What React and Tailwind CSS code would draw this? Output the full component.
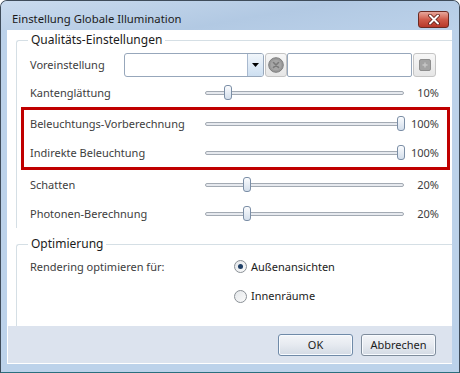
import React from "react";

const font = { fontFamily: '"Noto Sans", "Open Sans", sans-serif' };

function Slider({ value }) {
  const left = Math.round((value / 100) * 192);
  return (
    <div className="relative w-[199px] h-[16px] flex items-center">
      <div className="w-full h-[4px] rounded-[2px] border border-[#a3aab3] bg-[#e6e9ee]" />
      <div
        className="absolute top-0 w-[8px] h-[15px] rounded-[3px] border border-[#7b8ea6] bg-gradient-to-b from-[#fbfcfe] to-[#d3deeb]"
        style={{ left }}
      />
    </div>
  );
}

function SliderRow({ label, value }) {
  return (
    <div className="flex items-center h-[29px] text-[#3d3d3d]">
      <div className="w-[175px] shrink-0">{label}</div>
      <Slider value={value} />
      <div className="w-[35px] text-right">{value}%</div>
    </div>
  );
}

function Radio({ checked, label }) {
  return (
    <div className="flex items-center gap-[4px]">
      <div className="w-[13px] h-[13px] rounded-full border border-[#8a9096] bg-gradient-to-br from-[#e4e7ea] to-[#fbfbfb] flex items-center justify-center">
        {checked && <div className="w-[5px] h-[5px] rounded-full bg-[#1f3f66]" />}
      </div>
      <span className="text-[#1c1c1c]">{label}</span>
    </div>
  );
}

export default function App() {
  return (
    <div
      className="w-[460px] h-[373px] flex flex-col rounded-t-[7px] border border-[#3f4c5a] border-b-[#2b6f7e] bg-[#bcd2ea] overflow-hidden text-[11px] leading-[16px]"
      style={font}
    >
      {/* title bar */}
      <div className="h-[29px] shrink-0 flex items-center justify-between pl-[11px] pr-[10px] bg-[linear-gradient(170deg,#cadbee_0%,#b2c9e3_55%,#bcd2ea_100%)]">
        <span className="text-[11.3px] text-[#1a1a1a] pt-[6px]">Einstellung Globale Illumination</span>
        <div className="mt-[7px] w-[31px] h-[17px] rounded-[3px] border border-[#6b2a22] bg-gradient-to-b from-[#e6a79c] via-[#cf5b4a] to-[#b7382a] flex items-center justify-center">
          <svg width="14" height="11" viewBox="0 0 14 11">
            <path d="M3 1.5 L11 9.5 M11 1.5 L3 9.5" stroke="#5a1a14" strokeWidth="3.6" strokeLinecap="round" />
            <path d="M3 1.5 L11 9.5 M11 1.5 L3 9.5" stroke="#ffffff" strokeWidth="2" strokeLinecap="round" />
          </svg>
        </div>
      </div>

      {/* client */}
      <div className="ml-[6px] mr-[7px] flex-1 flex flex-col border-l border-b border-white">
        <div className="flex-1 bg-white flex flex-col pl-[8px]">
          {/* group 1 */}
          <fieldset className="mt-[2px] border-l border-t border-[#d5dfe5] rounded-tl-[3px] m-0 p-0 min-w-0">
            <legend className="ml-[11px] px-[3px] text-[12px] text-[#1b1b1b]">Qualitäts-Einstellungen</legend>
            <div className="pt-[5px] flex flex-col">
              <div className="flex items-center h-[24px] pl-[13px] text-[#3d3d3d]">
                <div className="w-[94px] shrink-0">Voreinstellung</div>
                <div className="w-[140px] h-[24px] flex rounded-[3px] border border-[#97a7bb] bg-white overflow-hidden">
                  <div className="flex-1" />
                  <div className="w-[16px] border-l border-[#a8b9cf] bg-gradient-to-b from-[#f1f6fb] to-[#cddff1] flex items-center justify-center">
                    <svg width="7" height="4" viewBox="0 0 7 4">
                      <path d="M0 0 H7 L3.5 4 Z" fill="#000" />
                    </svg>
                  </div>
                </div>
                <div className="ml-[1px] w-[22px] h-[24px] rounded-[3px] border border-[#c4c4c4] bg-gradient-to-b from-[#f7f7f7] to-[#e6e6e6] flex items-center justify-center">
                  <svg width="16" height="16" viewBox="0 0 16 16">
                    <circle cx="8" cy="8" r="7.3" fill="#9a9a9a" stroke="#7e7e7e" strokeWidth="1" />
                    <circle cx="8" cy="8" r="5.3" fill="#a6a6a6" />
                    <path d="M5.5 5.5 L10.5 10.5 M10.5 5.5 L5.5 10.5" stroke="#7a7a7a" strokeWidth="1.6" strokeLinecap="round" />
                  </svg>
                </div>
                <div className="w-[125px] h-[24px] rounded-[2px] border border-[#97a7bb] bg-white" />
                <div className="ml-[1px] w-[23px] h-[24px] rounded-[3px] border border-[#c4c4c4] bg-gradient-to-b from-[#f7f7f7] to-[#e6e6e6] flex items-center justify-center">
                  <svg width="12" height="12" viewBox="0 0 12 12">
                    <rect x="0.5" y="0.5" width="11" height="11" rx="1.5" fill="#a3a3a3" stroke="#8e8e8e" />
                    <path d="M6 3.5 V8.5 M3.5 6 H8.5" stroke="#c6c6c6" strokeWidth="1.4" />
                  </svg>
                </div>
              </div>
              <div className="pl-[13px] mt-[1px]">
                <SliderRow label="Kantenglättung" value={10} />
              </div>
              <div className="ml-[4px] mr-[2px] border-[3px] border-[#c00000] pl-[6px] flex flex-col">
                <div className="h-[28px] flex items-center">
                  <SliderRow label="Beleuchtungs-Vorberechnung" value={100} />
                </div>
                <div className="h-[29px] flex items-center">
                  <SliderRow label="Indirekte Beleuchtung" value={100} />
                </div>
              </div>
              <div className="pl-[13px]">
                <SliderRow label="Schatten" value={20} />
                <SliderRow label="Photonen-Berechnung" value={20} />
              </div>
            </div>
          </fieldset>

          {/* group 2 */}
          <fieldset className="mt-[8px] flex-1 border-l border-t border-[#d5dfe5] rounded-tl-[3px] m-0 p-0 min-w-0">
            <legend className="ml-[11px] px-[3px] text-[12px] text-[#1b1b1b]">Optimierung</legend>
            <div className="pl-[13px] flex flex-col text-[#3d3d3d]">
              <div className="h-[29px] flex items-center">
                <div className="w-[204px] shrink-0">Rendering optimieren für:</div>
                <Radio checked label="Außenansichten" />
              </div>
              <div className="h-[30px] flex items-center">
                <div className="w-[204px] shrink-0" />
                <Radio label="Innenräume" />
              </div>
            </div>
          </fieldset>
        </div>

        {/* button panel */}
        <div className="h-[37px] shrink-0 bg-[#dce3ee] flex items-center justify-end gap-[8px] pr-[16px]">
          <button className="w-[75px] h-[22px] rounded-[3px] border border-[#6f8aa8] bg-gradient-to-b from-[#f3f5f8] via-[#e6eaf0] to-[#d3dae4] text-[#1c1c1c] text-[11px] shadow-[inset_0_0_0_1px_#f8fbff]">OK</button>
          <button className="w-[75px] h-[22px] rounded-[3px] border border-[#7e8c9c] bg-gradient-to-b from-[#f3f5f8] via-[#e6eaf0] to-[#d3dae4] text-[#1c1c1c] text-[11px] shadow-[inset_0_0_0_1px_#f8fbff]">Abbrechen</button>
        </div>
      </div>
      <div className="h-[8px] shrink-0" />
    </div>
  );
}
